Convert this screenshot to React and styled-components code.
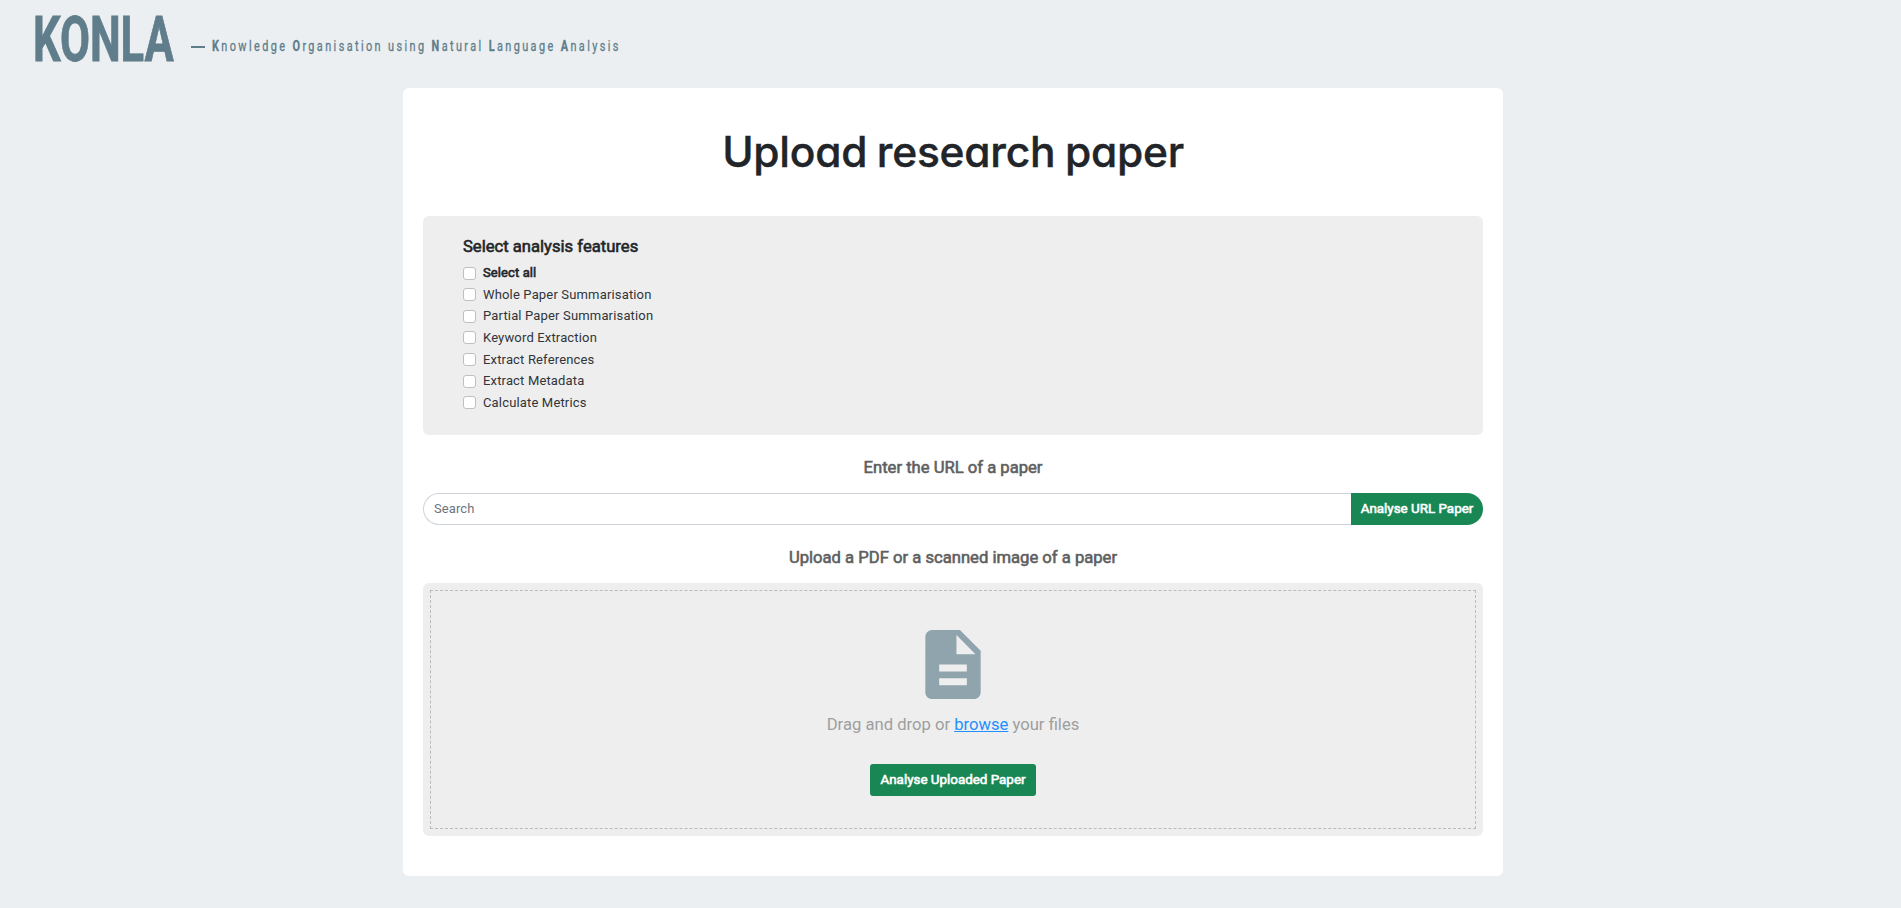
import React from "react";
import styled, { createGlobalStyle } from "styled-components";

const GlobalStyle = createGlobalStyle`
  *, *::before, *::after { box-sizing: border-box; }
  body {
    margin: 0;
    background: #eceff1;
    color: #212529;
    font-family: Roboto, "Liberation Sans", sans-serif;
    font-size: 13px;
  }
`;

const Page = styled.div`
  min-height: 908px;
  display: flex;
  flex-direction: column;
`;

const Header = styled.header`
  height: 88px;
  padding: 0 33px;
  display: flex;
  align-items: flex-start;
  color: #607d8b;
`;

const Brand = styled.h1`
  margin: 0;
  width: 158px;
  padding-top: 2px;
  font-size: 63px;
  line-height: 76px;
  font-weight: 700;
  white-space: nowrap;
  transform: scaleX(0.69);
  transform-origin: 0 0;
  -webkit-text-stroke: 0.8px currentColor;
`;

const Dash = styled.span`
  flex: none;
  width: 14px;
  height: 2px;
  margin-top: 46px;
  margin-right: 7px;
  background: #607d8b;
`;

const Tagline = styled.p`
  margin: 0;
  font-size: 15px;
  line-height: 20px;
  padding-top: 36px;
  letter-spacing: 3.3px;
  white-space: nowrap;
  transform: scaleX(0.726);
  transform-origin: 0 0;
  -webkit-text-stroke: 0.3px currentColor;

  b { font-weight: 700; }
`;

const Content = styled.div`
  display: flex;
  justify-content: center;
  padding-left: 5px;
`;

const Card = styled.main`
  width: 1100px;
  height: 788px;
  padding: 0 20px;
  border-radius: 6px;
  background: #fff;
  display: flex;
  flex-direction: column;
`;

const Title = styled.h2`
  margin: 0;
  height: 128px;
  line-height: 128px;
  text-align: center;
  font-family: Inter, sans-serif;
  font-size: 42.5px;
  font-weight: 500;
  font-feature-settings: "cv11";
  letter-spacing: -0.25px;
  word-spacing: -1.5px;
  white-space: nowrap;
  -webkit-text-stroke: 0.4px currentColor;
`;

const Features = styled.section`
  height: 219px;
  padding: 20px 40px 0;
  border-radius: 6px;
  background: #eee;
`;

const FeaturesHeading = styled.h3`
  margin: 0 0 5px;
  font-size: 16.64px;
  line-height: 21px;
  font-weight: 400;
  -webkit-text-stroke: 0.6px currentColor;
`;

const Option = styled.label`
  display: flex;
  align-items: center;
  gap: 7px;
  height: 21.6px;
  color: ${(p) => (p.$strong ? "#212529" : "#30353a")};
  letter-spacing: ${(p) => (p.$strong ? "0.1px" : "0.16px")};
  -webkit-text-stroke: ${(p) => (p.$strong ? "0.6px currentColor" : "0")};
`;

const Checkbox = styled.input`
  appearance: none;
  flex: none;
  width: 13px;
  height: 13px;
  margin: 0.5px 0 0;
  border: 1px solid #bfbfbf;
  border-radius: 3px;
  background: #fff;
`;

const SectionLabel = styled.h3`
  margin: 0;
  height: 58px;
  padding-top: 23px;
  text-align: center;
  font-size: 16.64px;
  line-height: 20px;
  font-weight: 400;
  color: #5f5f5f;
  -webkit-text-stroke: 0.6px currentColor;
`;

const SearchRow = styled.form`
  display: flex;
  height: 32px;
`;

const SearchInput = styled.input`
  flex: 1;
  min-width: 0;
  padding: 0 10px 2px;
  border: 1px solid #ced4da;
  border-right: 0;
  border-radius: 16px 0 0 16px;
  background: #fff;
  font: inherit;
  letter-spacing: 0.1px;
  outline: 0;

  &::placeholder { color: #6c757d; opacity: 1; }
`;

const Button = styled.button`
  width: ${(p) => p.$width}px;
  height: 32px;
  padding: 0 0 2px;
  border: 0;
  border-radius: ${(p) => (p.$joined ? "0 16px 16px 0" : "3px")};
  background: #198754;
  color: #fff;
  font-family: inherit;
  font-size: 13.4px;
  white-space: nowrap;
  -webkit-text-stroke: 0.6px currentColor;
`;

const DropZone = styled.section`
  height: 253px;
  padding: 7px;
  border-radius: 6px;
  background: #eee;
`;

const DropArea = styled.div`
  height: 239px;
  padding-top: 32px;
  border: 1px dashed #bbb;
  display: flex;
  flex-direction: column;
  align-items: center;
`;

const FileIcon = styled.svg`
  width: 84px;
  height: 83px;
  fill: #90a4ae;
`;

const DropText = styled.p`
  margin: 9px 0 29px;
  font-size: 16.64px;
  line-height: 20px;
  color: #9e9e9e;
`;

const Browse = styled.span`
  color: #1e90ff;
  text-decoration: underline;
`;

const features = [
  "Select all",
  "Whole Paper Summarisation",
  "Partial Paper Summarisation",
  "Keyword Extraction",
  "Extract References",
  "Extract Metadata",
  "Calculate Metrics",
];

export default function App() {
  return (
    <Page>
      <GlobalStyle />
      <Header>
        <Brand>KONLA</Brand>
        <Dash />
        <Tagline>
          <b>K</b>nowledge <b>O</b>rganisation using <b>N</b>atural <b>L</b>anguage <b>A</b>nalysis
        </Tagline>
      </Header>
      <Content>
        <Card>
          <Title>Upload research paper</Title>
          <Features>
            <FeaturesHeading>Select analysis features</FeaturesHeading>
            {features.map((name, i) => (
              <Option key={name} $strong={i === 0}>
                <Checkbox type="checkbox" />
                {name}
              </Option>
            ))}
          </Features>
          <SectionLabel>Enter the URL of a paper</SectionLabel>
          <SearchRow>
            <SearchInput placeholder="Search" />
            <Button type="button" $width={132} $joined>Analyse URL Paper</Button>
          </SearchRow>
          <SectionLabel>Upload a PDF or a scanned image of a paper</SectionLabel>
          <DropZone>
            <DropArea>
              <FileIcon viewBox="0 0 24 24">
                <path d="M14 2H6c-1.1 0-1.99.9-1.99 2L4 20c0 1.1.89 2 1.99 2H18c1.1 0 2-.9 2-2V8l-6-6zm2 16H8v-2h8v2zm0-4H8v-2h8v2zm-3-5V3.5L18.5 9H13z" />
              </FileIcon>
              <DropText>
                Drag and drop or <Browse>browse</Browse> your files
              </DropText>
              <Button type="button" $width={166}>Analyse Uploaded Paper</Button>
            </DropArea>
          </DropZone>
        </Card>
      </Content>
    </Page>
  );
}
